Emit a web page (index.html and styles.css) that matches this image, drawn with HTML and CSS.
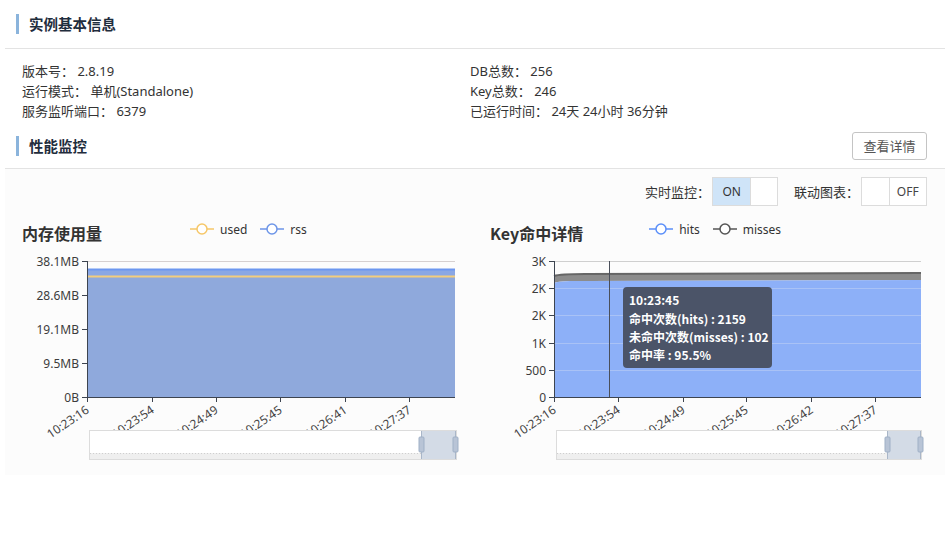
FILE: index.html
```html
<!DOCTYPE html>
<html lang="zh-CN">
<head>
<meta charset="utf-8">
<title>实例基本信息</title>
<link rel="stylesheet" href="styles.css">
</head>
<body>
<div class="page">
  <div class="sec-head">
    <span class="sec-title">实例基本信息</span>
  </div>
  <div class="info">
    <div class="info-col">
      <div>版本号： 2.8.19</div>
      <div>运行模式： 单机(Standalone)</div>
      <div>服务监听端口： 6379</div>
    </div>
    <div class="info-col">
      <div>DB总数： 256</div>
      <div>Key总数： 246</div>
      <div>已运行时间： 24天 24小时 36分钟</div>
    </div>
  </div>
  <div class="sec-head perf">
    <span class="sec-title">性能监控</span>
    <button class="btn">查看详情</button>
  </div>
  <div class="panel">
    <div class="toggles">
      <span class="tg-label">实时监控：</span>
      <div class="toggle">
        <span class="tg-on">ON</span><span class="tg-blank"></span>
      </div>
      <span class="tg-label second">联动图表：</span>
      <div class="toggle">
        <span class="tg-blank"></span><span class="tg-off">OFF</span>
      </div>
    </div>
    <div class="charts">
      <div class="chart">
        <div class="chart-head left">
          <span class="chart-title">内存使用量</span>
          <div class="legend l-left">
            <span class="lg-item"><svg class="lg-icon" width="24" height="12" viewBox="0 0 24 12"><line x1="0" y1="6" x2="24" y2="6" stroke="#f6c768" stroke-width="1.5"/><circle cx="12" cy="6" r="5" fill="#fff" stroke="#f6c768" stroke-width="1.5"/></svg>used</span>
            <span class="lg-item"><svg class="lg-icon" width="24" height="12" viewBox="0 0 24 12"><line x1="0" y1="6" x2="24" y2="6" stroke="#6d95e8" stroke-width="1.5"/><circle cx="12" cy="6" r="5" fill="#fff" stroke="#6d95e8" stroke-width="1.5"/></svg>rss</span>
          </div>
        </div>
        <svg class="plot" width="470" height="228" viewBox="5 247 470 228">
          <line x1="87" y1="262.5" x2="455" y2="262.5" stroke="#d6d0d0"/>
          <rect x="87" y="270" width="368" height="128" fill="#8fa9dc"/>
          <rect x="87" y="271" width="368" height="6" fill="#8aa7e4"/>
          <line x1="87" y1="270.5" x2="455" y2="270.5" stroke="#6d97ef" stroke-width="2"/>
          <line x1="87" y1="277.5" x2="455" y2="277.5" stroke="#f3cd7c" stroke-width="2"/>
          <line x1="87.5" y1="262" x2="87.5" y2="398" stroke="#3d4450"/>
          <line x1="87" y1="398.5" x2="455" y2="398.5" stroke="#3d4450"/>
          <g stroke="#3d4450">
            <line x1="82" y1="262.5" x2="87" y2="262.5"/>
            <line x1="82" y1="296.5" x2="87" y2="296.5"/>
            <line x1="82" y1="330.5" x2="87" y2="330.5"/>
            <line x1="82" y1="364.5" x2="87" y2="364.5"/>
            <line x1="82" y1="398.5" x2="87" y2="398.5"/>
            <line x1="87.5" y1="398" x2="87.5" y2="403"/>
            <line x1="152.5" y1="398" x2="152.5" y2="403"/>
            <line x1="216.5" y1="398" x2="216.5" y2="403"/>
            <line x1="280.5" y1="398" x2="280.5" y2="403"/>
            <line x1="345.5" y1="398" x2="345.5" y2="403"/>
            <line x1="409.5" y1="398" x2="409.5" y2="403"/>
          </g>
          <g class="ylab" text-anchor="end">
            <text x="79" y="266.5">38.1MB</text>
            <text x="79" y="300.5">28.6MB</text>
            <text x="79" y="334.5">19.1MB</text>
            <text x="79" y="368.5">9.5MB</text>
            <text x="79" y="402.5">0B</text>
          </g>
          <g class="xlab" text-anchor="end">
            <text transform="translate(90 413) rotate(-34)">10:23:16</text>
            <text transform="translate(155 413) rotate(-34)">10:23:54</text>
            <text transform="translate(219 413) rotate(-34)">10:24:49</text>
            <text transform="translate(283 413) rotate(-34)">10:25:45</text>
            <text transform="translate(348 413) rotate(-34)">10:26:41</text>
            <text transform="translate(412 413) rotate(-34)">10:27:37</text>
          </g>
          <rect x="89.5" y="431.5" width="367" height="29" fill="#fff" stroke="#dcdcdc"/>
          <rect x="90" y="454" width="366" height="6" fill="#efefef"/>
          <line x1="90" y1="454.5" x2="456" y2="454.5" stroke="#cfcfcf" stroke-dasharray="1 2"/>
          <rect x="421" y="432" width="35" height="28" fill="#d3dbe6"/>
          <line x1="421.5" y1="432" x2="421.5" y2="460" stroke="#a9b6c8"/>
          <line x1="455.5" y1="432" x2="455.5" y2="460" stroke="#a9b6c8"/>
          <rect x="419" y="438" width="5" height="15" rx="1" fill="#b8c4d6" stroke="#9fb0c6"/>
          <rect x="453" y="438" width="5" height="15" rx="1" fill="#b8c4d6" stroke="#9fb0c6"/>
        </svg>
      </div>
      <div class="chart">
        <div class="chart-head right">
          <span class="chart-title">Key命中详情</span>
          <div class="legend l-right">
            <span class="lg-item"><svg class="lg-icon" width="24" height="12" viewBox="0 0 24 12"><line x1="0" y1="6" x2="24" y2="6" stroke="#5b8ff9" stroke-width="1.5"/><circle cx="12" cy="6" r="5" fill="#fff" stroke="#5b8ff9" stroke-width="1.5"/></svg>hits</span>
            <span class="lg-item"><svg class="lg-icon" width="24" height="12" viewBox="0 0 24 12"><line x1="0" y1="6" x2="24" y2="6" stroke="#555" stroke-width="1.5"/><circle cx="12" cy="6" r="5" fill="#fff" stroke="#555" stroke-width="1.5"/></svg>misses</span>
          </div>
        </div>
        <svg class="plot" width="470" height="228" viewBox="475 247 470 228">
          <line x1="554" y1="262.5" x2="921" y2="262.5" stroke="#cfcfcf"/>
          <path d="M554,277 C560,275 570,275 585,275 L921,274 L921,281 L585,282 C570,282 560,282 554,284 Z" fill="#8c8c8c"/>
          <path d="M554,277 C560,275 570,275 585,275 L921,274" fill="none" stroke="#666" stroke-width="2"/>
          <path d="M554,284 C560,282 570,282 585,282 L921,281 L921,398 L554,398 Z" fill="#8db0f8"/>
          <g stroke="#a9c2f6">
            <line x1="554" y1="289.5" x2="921" y2="289.5"/>
            <line x1="554" y1="316.5" x2="921" y2="316.5"/>
            <line x1="554" y1="344.5" x2="921" y2="344.5"/>
            <line x1="554" y1="371.5" x2="921" y2="371.5"/>
          </g>
          <line x1="609.5" y1="262" x2="609.5" y2="398" stroke="#4a4f5a"/>
          <line x1="554.5" y1="262" x2="554.5" y2="398" stroke="#3d4450"/>
          <line x1="554" y1="398.5" x2="921" y2="398.5" stroke="#3d4450"/>
          <g stroke="#3d4450">
            <line x1="549" y1="262.5" x2="554" y2="262.5"/>
            <line x1="549" y1="289.5" x2="554" y2="289.5"/>
            <line x1="549" y1="316.5" x2="554" y2="316.5"/>
            <line x1="549" y1="344.5" x2="554" y2="344.5"/>
            <line x1="549" y1="371.5" x2="554" y2="371.5"/>
            <line x1="549" y1="398.5" x2="554" y2="398.5"/>
            <line x1="554.5" y1="398" x2="554.5" y2="403"/>
            <line x1="618.5" y1="398" x2="618.5" y2="403"/>
            <line x1="683.5" y1="398" x2="683.5" y2="403"/>
            <line x1="746.5" y1="398" x2="746.5" y2="403"/>
            <line x1="811.5" y1="398" x2="811.5" y2="403"/>
            <line x1="875.5" y1="398" x2="875.5" y2="403"/>
          </g>
          <g class="ylab" text-anchor="end">
            <text x="546" y="266.5">3K</text>
            <text x="546" y="293.5">2K</text>
            <text x="546" y="320.5">2K</text>
            <text x="546" y="348.5">1K</text>
            <text x="546" y="375.5">500</text>
            <text x="546" y="402.5">0</text>
          </g>
          <g class="xlab" text-anchor="end">
            <text transform="translate(557 413) rotate(-34)">10:23:16</text>
            <text transform="translate(621 413) rotate(-34)">10:23:54</text>
            <text transform="translate(686 413) rotate(-34)">10:24:49</text>
            <text transform="translate(749 413) rotate(-34)">10:25:45</text>
            <text transform="translate(814 413) rotate(-34)">10:26:42</text>
            <text transform="translate(878 413) rotate(-34)">10:27:37</text>
          </g>
          <rect x="556.5" y="431.5" width="365" height="29" fill="#fff" stroke="#dcdcdc"/>
          <rect x="557" y="454" width="364" height="6" fill="#efefef"/>
          <line x1="557" y1="454.5" x2="921" y2="454.5" stroke="#cfcfcf" stroke-dasharray="1 2"/>
          <rect x="887" y="432" width="34" height="28" fill="#d3dbe6"/>
          <line x1="887.5" y1="432" x2="887.5" y2="460" stroke="#a9b6c8"/>
          <line x1="920.5" y1="432" x2="920.5" y2="460" stroke="#a9b6c8"/>
          <rect x="885" y="438" width="5" height="15" rx="1" fill="#b8c4d6" stroke="#9fb0c6"/>
          <rect x="918" y="438" width="5" height="15" rx="1" fill="#b8c4d6" stroke="#9fb0c6"/>
          <rect x="623" y="288" width="149" height="81" rx="4" fill="#4b5468"/>
          <g class="tip">
            <text x="629" y="306">10:23:45</text>
            <text x="629" y="325">命中次数(hits) : 2159</text>
            <text x="629" y="343">未命中次数(misses) : 102</text>
            <text x="629" y="361">命中率 : 95.5%</text>
          </g>
        </svg>
      </div>
    </div>
  </div>
</div>
</body>
</html>
```

FILE: styles.css
```css
* { box-sizing: border-box; }
html, body { margin: 0; padding: 0; background: #fff; }
body {
  font-family: "Noto Sans", "Noto Sans CJK SC", sans-serif;
  color: #333;
  width: 945px;
  height: 534px;
  overflow: hidden;
}
.page { padding-left: 5px; }

.sec-head {
  display: flex;
  align-items: center;
  height: 49px;
  border-bottom: 1px solid #e3e3e3;
  padding-left: 11px;
}
.sec-title {
  border-left: 3px solid #8bb4dc;
  padding-left: 10px;
  height: 20px;
  line-height: 20px;
  font-size: 14.5px;
  font-weight: bold;
  color: #1f2d3d;
  font-family: "Noto Sans CJK SC", sans-serif;
}
.sec-head.perf {
  height: 48px;
  padding-top: 2px;
  justify-content: space-between;
  padding-right: 18px;
}
.btn {
  height: 28px;
  width: 75px;
  border: 1px solid #c4c4c4;
  border-radius: 3px;
  background: #fff;
  font-family: "Noto Sans CJK SC", sans-serif;
  font-size: 13px;
  color: #555;
  padding: 0;
}

.info {
  display: flex;
  padding: 12px 0 0 17px;
  height: 72px;
  font-size: 13px;
  line-height: 20px;
  color: #333;
}
.info-col:first-child { width: 448px; }

.panel {
  background: #fcfcfc;
  height: 306px;
}
.toggles {
  display: flex;
  justify-content: flex-end;
  align-items: center;
  padding: 8px 18px 0 0;
  font-size: 13px;
}
.tg-label { margin-right: 2px; color: #333; }
.tg-label.second { margin-left: 16px; }
.toggle {
  display: flex;
  height: 29px;
  width: 66px;
  border: 1px solid #dcdcdc;
  background: #fff;
  font-size: 12px;
}
.tg-on {
  width: 38px;
  background: #cfe4f8;
  display: flex;
  align-items: center;
  justify-content: center;
  color: #333;
}
.tg-off {
  width: 38px;
  border-left: 1px solid #dcdcdc;
  display: flex;
  align-items: center;
  justify-content: center;
  color: #444;
}
.tg-blank { width: 27px; }
.tg-on + .tg-blank { border-left: 1px solid #dcdcdc; }

.charts {
  display: flex;
  margin-top: 10px;
}
.chart { width: 470px; }
.chart-head {
  display: flex;
  align-items: center;
  height: 30px;
}
.chart-head.left { padding-left: 17px; }
.chart-head.right { padding-left: 15px; }
.chart-title {
  font-size: 16px;
  font-weight: bold;
  color: #333;
  padding-top: 3px;
  font-family: "Noto Sans CJK SC", sans-serif;
}
.legend {
  display: flex;
  gap: 13px;
  font-size: 12px;
  color: #333;
  margin-bottom: 4px;
}
.l-left { margin-left: 88px; }
.l-right { margin-left: 66px; }
.lg-item { display: flex; align-items: center; }
.lg-icon { margin-right: 6px; }

.plot { display: block; }
.ylab text, .xlab text {
  font-family: "Noto Sans", "Noto Sans CJK SC", sans-serif;
  font-size: 12px;
  fill: #3c3c3c;
}
.xlab text { fill: #444; }
.tip text {
  font-family: "Noto Sans CJK SC", sans-serif;
  font-size: 12px;
  font-weight: bold;
  fill: #fff;
}
```
